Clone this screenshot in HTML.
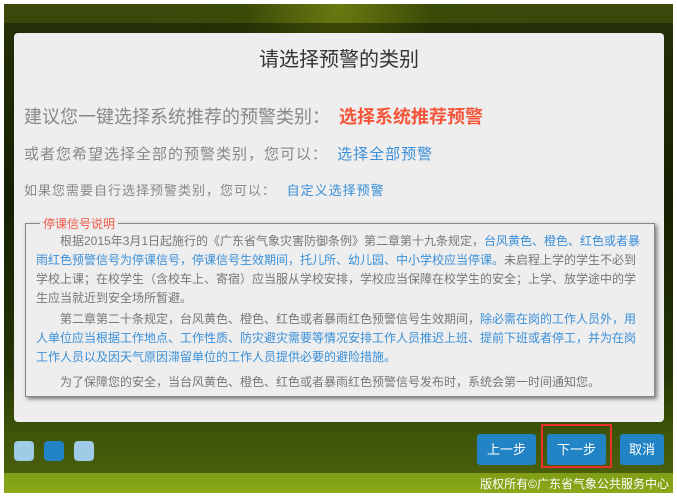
<!DOCTYPE html>
<html><head><meta charset="utf-8"><style>
*{margin:0;padding:0;box-sizing:border-box}
body{width:677px;height:497px;background:#fff;position:relative;overflow:hidden;font-family:"Liberation Sans","Noto Sans CJK SC",sans-serif}
#bg{position:absolute;left:4px;top:4px;width:669px;height:489px;background:radial-gradient(ellipse at 50% 0%,#6b7a10 0%,#3a4a08 20%,transparent 40%),linear-gradient(180deg,#3c4a0c 0%,#1e2a06 40%,#3a5008 75%,#6a8a10 88%,#8aa818 100%)}
#ov{position:absolute;left:4px;top:23px;width:669px;height:450px;background:rgba(10,20,0,.45)}
#panel{position:absolute;left:14px;top:33px;width:650px;height:389px;background:#eeeeee;border-radius:4px}
h1{position:absolute;left:0;width:650px;top:10px;text-align:center;font-size:20px;font-weight:normal;color:#333}
.l{position:absolute;left:10px;color:#888;white-space:nowrap}
.b{color:#3a8fd8}
fieldset{position:absolute;left:11px;top:182px;width:630px;height:182px;border:1px solid #888;box-shadow:2px 2px 4px #777;padding:0 10px}
legend{color:#f05a4a;font-size:12px;margin-left:4px;padding:0 3px}
fieldset p{font-size:12px;line-height:19px;color:#777;text-indent:24px;margin-bottom:2px;margin-top:0}
fieldset p.last{margin-top:6px}
.btn{position:absolute;top:434px;height:31px;background:#2284c4;color:#fff;font-size:13px;text-align:center;line-height:31px;border-radius:3px}
.dot{position:absolute;top:441px;width:20px;height:20px;border-radius:4px;background:#9fcbe6}
</style></head><body>
<div id="bg"></div><div id="ov"></div>
<div id="panel">
<h1>请选择预警的类别</h1>
<div class="l" style="top:70px;font-size:18px">建议您一键选择系统推荐的预警类别： <span style="color:#f5563a;font-weight:bold;margin-left:4px">选择系统推荐预警</span></div>
<div class="l" style="top:110px;font-size:15px;letter-spacing:1px">或者您希望选择全部的预警类别，您可以： <span class="b" style="margin-left:4px">选择全部预警</span></div>
<div class="l" style="top:147px;font-size:13px;letter-spacing:1px">如果您需要自行选择预警类别，您可以： <span class="b" style="margin-left:6px">自定义选择预警</span></div>
<fieldset><legend>停课信号说明</legend>
<p>根据2015年3月1日起施行的《广东省气象灾害防御条例》第二章第十九条规定，<span class="b">台风黄色、橙色、红色或者暴雨红色预警信号为停课信号，停课信号生效期间，托儿所、幼儿园、中小学校应当停课。</span>未启程上学的学生不必到学校上课；在校学生（含校车上、寄宿）应当服从学校安排，学校应当保障在校学生的安全；上学、放学途中的学生应当就近到安全场所暂避。</p>
<p>第二章第二十条规定，台风黄色、橙色、红色或者暴雨红色预警信号生效期间，<span class="b">除必需在岗的工作人员外，用人单位应当根据工作地点、工作性质、防灾避灾需要等情况安排工作人员推迟上班、提前下班或者停工，并为在岗工作人员以及因天气原因滞留单位的工作人员提供必要的避险措施。</span></p>
<p class="last">为了保障您的安全，当台风黄色、橙色、红色或者暴雨红色预警信号发布时，系统会第一时间通知您。</p>
</fieldset>
</div>
<div class="dot" style="left:14px"></div><div class="dot" style="left:44px;background:#2284c4"></div><div class="dot" style="left:74px"></div>
<div class="btn" style="left:477px;width:59px">上一步</div>
<div style="position:absolute;left:541px;top:424px;width:71px;height:44px;border:2px solid #e83030"></div>
<div class="btn" style="left:547px;width:59px">下一步</div>
<div class="btn" style="left:620px;width:44px">取消</div>
<div style="position:absolute;right:8px;top:475px;color:#fff;font-size:12px">版权所有©广东省气象公共服务中心</div>
</body></html>
